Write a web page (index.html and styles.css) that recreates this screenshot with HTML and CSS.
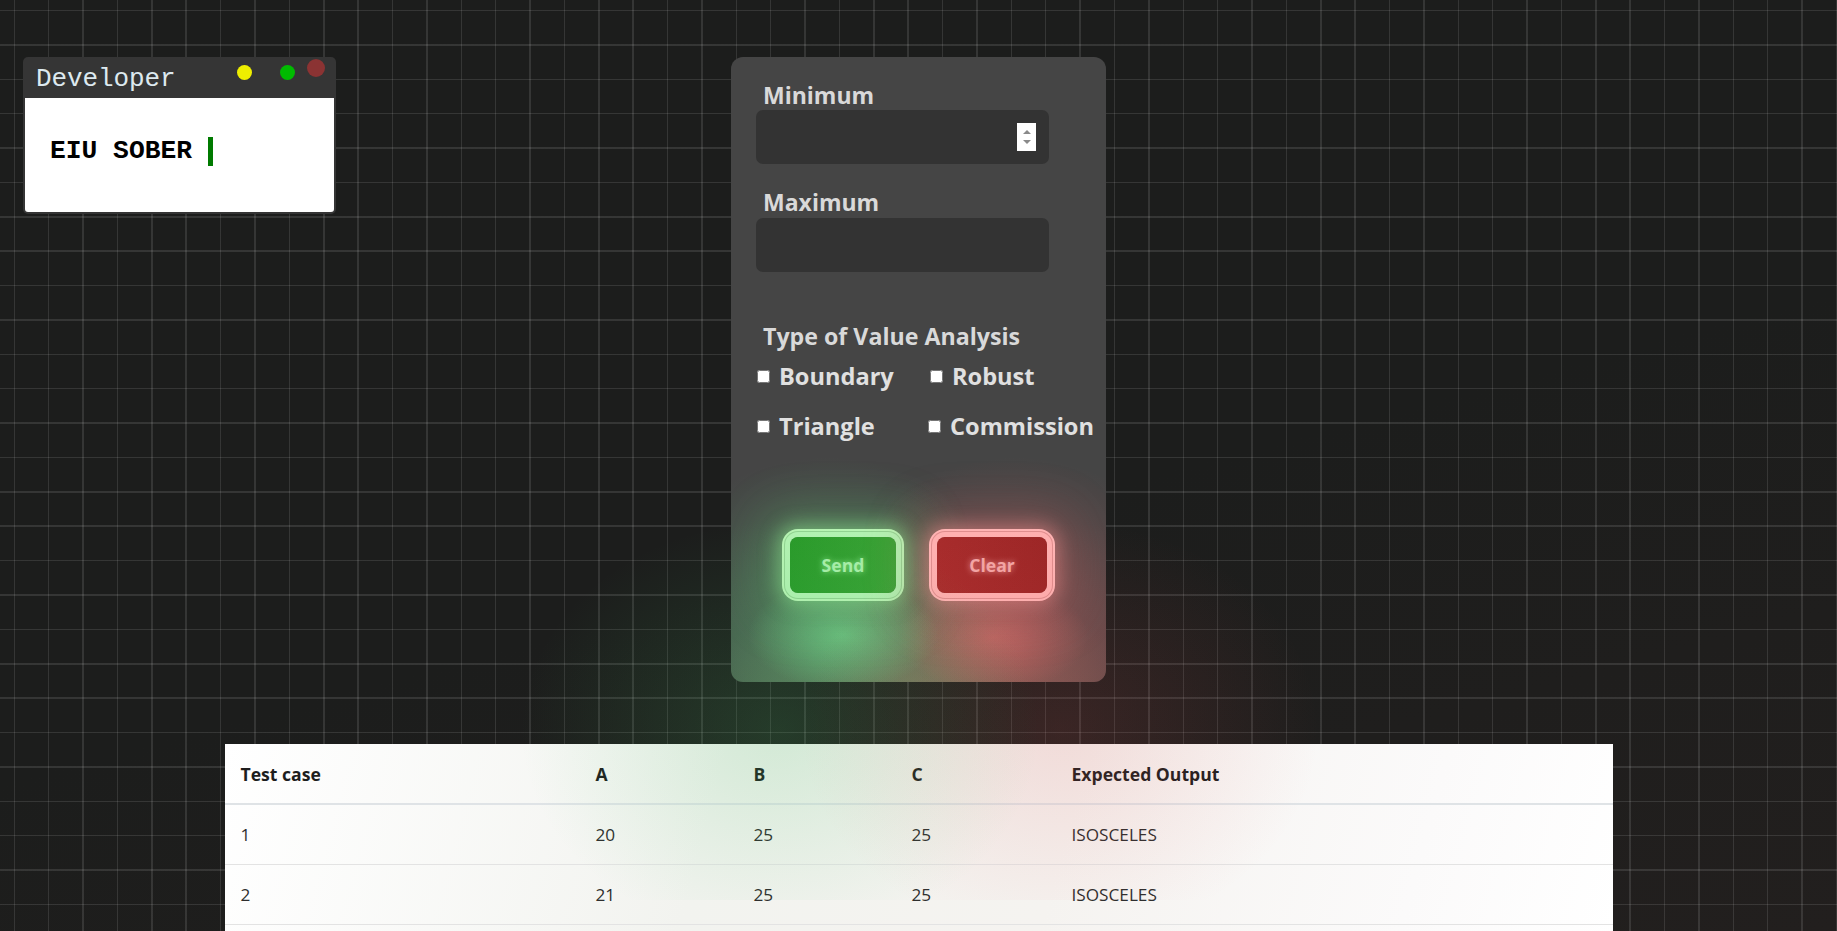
FILE: index.html
```html
<!DOCTYPE html>
<html lang="en">
<head>
<meta charset="utf-8">
<title>Value Analysis</title>
<link rel="stylesheet" href="styles.css">
</head>
<body>
<div class="devwin">
  <div class="devwin-head">
    <span class="devwin-title">Developer</span>
    <span class="dot dot-yellow"></span>
    <span class="dot dot-green"></span>
    <span class="dot dot-red"></span>
  </div>
  <div class="devwin-body">
    <span class="devwin-text">EIU SOBER&nbsp;</span><span class="cursor"></span>
  </div>
</div>

<main class="page">
  <section class="panel">
    <div class="panel-glow"></div>
    <div class="panel-content">
      <label class="field-label" for="min">Minimum</label>
      <div class="input-wrap">
        <input class="field-input" id="min" type="text">
        <span class="spinner"><span class="spin-up"></span><span class="spin-down"></span></span>
      </div>
      <label class="field-label field-label-2" for="max">Maximum</label>
      <div class="input-wrap">
        <input class="field-input" id="max" type="text">
      </div>
      <div class="section-title">Type of Value Analysis</div>
      <div class="checks">
        <label class="check"><input type="checkbox"><span>Boundary</span></label>
        <label class="check"><input type="checkbox"><span>Robust</span></label>
        <label class="check"><input type="checkbox"><span>Triangle</span></label>
        <label class="check check-shift"><input type="checkbox"><span>Commission</span></label>
      </div>
      <div class="buttons">
        <button class="btn btn-send" type="button">Send</button>
        <button class="btn btn-clear" type="button">Clear</button>
      </div>
    </div>
  </section>

  <div class="table-card">
    <table class="results">
      <colgroup>
        <col class="c1"><col class="c2"><col class="c3"><col class="c4"><col class="c5">
      </colgroup>
      <thead>
        <tr><th>Test case</th><th>A</th><th>B</th><th>C</th><th>Expected Output</th></tr>
      </thead>
      <tbody>
        <tr><td>1</td><td>20</td><td>25</td><td>25</td><td>ISOSCELES</td></tr>
        <tr><td>2</td><td>21</td><td>25</td><td>25</td><td>ISOSCELES</td></tr>
      </tbody>
    </table>
  </div>
</main>
<div class="outer-glow"></div>
</body>
</html>
```

FILE: styles.css
```css
html, body {
  margin: 0;
  padding: 0;
}
body {
  width: 1837px;
  height: 931px;
  overflow: hidden;
  position: relative;
  background-color: #1c1d1c;
  background-image:
    repeating-linear-gradient(to right, transparent 0, transparent 13.6px, rgba(255,255,255,0.11) 13.6px, rgba(255,255,255,0.11) 15.1px, transparent 15.1px, transparent 34.38px),
    repeating-linear-gradient(to bottom, transparent 0, transparent 9.8px, rgba(255,255,255,0.11) 9.8px, rgba(255,255,255,0.11) 11.3px, transparent 11.3px, transparent 34.38px),
    linear-gradient(165deg, #1c1d1c 55%, #221f1e 100%);
  background-size: 100% 100%;
  background-repeat: no-repeat;
  font-family: "Open Sans", "Liberation Sans", sans-serif;
}

/* Developer floating window */
.devwin {
  position: absolute;
  left: 23px;
  top: 57px;
  width: 313px;
  height: 157px;
  box-sizing: border-box;
  background: #353535;
  border-radius: 5px;
  padding: 0 2px 2px 2px;
  display: flex;
  flex-direction: column;
}
.devwin-head {
  height: 41px;
  display: flex;
  align-items: flex-start;
  padding-left: 11px;
}
.devwin-title {
  font-family: "Liberation Mono", "Courier New", monospace;
  font-size: 26px;
  line-height: 30px;
  margin-top: 7px;
  color: #dde9ef;
  letter-spacing: -0.1px;
}
.dot {
  display: block;
  border-radius: 50%;
}
.dot-yellow {
  width: 15px;
  height: 15px;
  background: #eeee00;
  margin-left: 61px;
  margin-top: 7.5px;
}
.dot-green {
  width: 15px;
  height: 15px;
  background: #00bb00;
  margin-left: 28px;
  margin-top: 7.5px;
}
.dot-red {
  width: 18px;
  height: 18px;
  background: #8b3333;
  margin-left: 12.5px;
  margin-top: 2px;
}
.devwin-body {
  flex: 1;
  background: #ffffff;
  border-radius: 0 0 3px 3px;
  display: flex;
  align-items: flex-start;
  padding: 39px 0 0 25px;
}
.devwin-text {
  font-family: "Liberation Mono", "Courier New", monospace;
  font-weight: bold;
  font-size: 26.3px;
  line-height: 29px;
  color: #000;
}
.cursor {
  display: block;
  width: 5px;
  height: 29px;
  background: #007a00;
}

/* Main column */
.page {
  display: flex;
  flex-direction: column;
  align-items: center;
  padding-top: 57px;
}

.panel {
  position: relative;
  width: 375px;
  height: 625px;
  box-sizing: border-box;
  background: #454545;
  border-radius: 12px;
  overflow: hidden;
}
.panel-glow {
  position: absolute;
  inset: 0;
  background:
    radial-gradient(ellipse 95px 55px at 112px 578px, rgba(120,230,150,0.6), rgba(120,230,150,0) 100%),
    radial-gradient(ellipse 95px 55px at 262px 580px, rgba(230,110,110,0.55), rgba(230,110,110,0) 100%),
    radial-gradient(ellipse 200px 190px at 95px 590px, rgba(90,180,115,0.45), rgba(90,180,115,0) 100%),
    radial-gradient(ellipse 200px 190px at 285px 590px, rgba(200,95,95,0.42), rgba(200,95,95,0) 100%),
    radial-gradient(ellipse 220px 130px at 190px 650px, rgba(170,150,110,0.45), rgba(170,150,110,0) 100%);
}
.panel-content {
  position: relative;
  padding: 24px 0 0 25px;
}
.field-label {
  display: block;
  font-weight: 700;
  font-size: 23px;
  line-height: 28px;
  color: #d9d9d9;
  padding-left: 7px;
  margin-bottom: 1px;
}
.field-label-2 {
  margin-top: 23.5px;
  margin-bottom: 2.5px;
}
.input-wrap {
  position: relative;
  width: 293px;
  height: 54px;
}
.field-input {
  display: block;
  width: 100%;
  height: 100%;
  box-sizing: border-box;
  border: none;
  border-radius: 7px;
  background: #333333;
  outline: none;
  padding: 0 14px;
  color: #eee;
  font-family: inherit;
  font-size: 18px;
}
.spinner {
  position: absolute;
  right: 13px;
  top: 13px;
  width: 19px;
  height: 28px;
  background: #ffffff;
  display: flex;
  flex-direction: column;
  align-items: center;
  justify-content: center;
  gap: 6px;
}
.spin-up {
  width: 0;
  height: 0;
  border-left: 4px solid transparent;
  border-right: 4px solid transparent;
  border-bottom: 4px solid #8a8a8a;
}
.spin-down {
  width: 0;
  height: 0;
  border-left: 4px solid transparent;
  border-right: 4px solid transparent;
  border-top: 4px solid #8a8a8a;
}
.section-title {
  font-weight: 700;
  font-size: 23.2px;
  line-height: 28px;
  color: #d9d9d9;
  padding-left: 7px;
  margin-top: 49.5px;
}
.checks {
  display: grid;
  grid-template-columns: 173px auto;
  row-gap: 22px;
  margin-top: 12px;
  padding-left: 1px;
}
.check {
  display: flex;
  align-items: center;
  gap: 9px;
  font-weight: 700;
  font-size: 23.6px;
  line-height: 28px;
  color: #e0e0e0;
  white-space: nowrap;
}
.check input {
  margin: 0;
  width: 13px;
  height: 13px;
  flex: none;
  position: relative;
  top: 1px;
}
.check-shift {
  margin-left: -2px;
}
.buttons {
  display: flex;
  justify-content: center;
  gap: 41px;
  margin-top: 97px;
  padding-right: 25px;
}
.btn {
  height: 56px;
  border: none;
  border-radius: 8px;
  font-family: inherit;
  font-weight: 700;
  font-size: 17.6px;
  cursor: pointer;
  padding: 0;
}
.btn-send {
  width: 106px;
  background: linear-gradient(90deg, #2a9a2a, #3aa236);
  color: #a9eea9;
  text-shadow: 0 0 6px rgba(170,255,170,0.8);
  box-shadow:
    0 0 0 5px #b2f2b2,
    0 0 0 6px #92d392,
    0 0 0 8px #b8f4b4,
    0 0 18px 12px rgba(150,240,150,0.5),
    0 0 48px 26px rgba(100,200,110,0.28);
}
.btn-clear {
  width: 110px;
  background: linear-gradient(90deg, #a82c2c, #9c2626);
  color: #f3a6a6;
  text-shadow: 0 0 6px rgba(255,180,180,0.8);
  box-shadow:
    0 0 0 5px #ffb0b0,
    0 0 0 6px #e08e8e,
    0 0 0 8px #ffb4b4,
    0 0 18px 12px rgba(255,150,150,0.45),
    0 0 48px 26px rgba(210,100,100,0.26);
}

/* Table */
.table-card {
  margin-top: 62px;
  width: 1388px;
  height: 200px;
  background: linear-gradient(105deg, #ffffff 0%, #f2f3ef 35%, #f5f3f0 60%, #fbfafa 85%, #ffffff 100%);
}
.results {
  width: 100%;
  table-layout: fixed;
  border-collapse: collapse;
}
.c1 { width: 355px; }
.c2 { width: 158px; }
.c3 { width: 158px; }
.c4 { width: 160px; }
.results th {
  text-align: left;
  font-weight: 700;
  font-size: 17.6px;
  color: #1e1e1e;
  height: 59px;
  padding: 0 0 0 16px;
  border-bottom: 2px solid #dfe3e6;
}
.results td {
  text-align: left;
  font-weight: 400;
  font-size: 17.2px;
  color: #2e2e2e;
  height: 59px;
  padding: 0 0 0 16px;
  border-bottom: 1px solid #e3e3e3;
}

.outer-glow {
  position: absolute;
  left: 520px;
  top: 500px;
  width: 800px;
  height: 400px;
  pointer-events: none;
  background:
    radial-gradient(ellipse 260px 210px at 260px 230px, rgba(70,190,100,0.19), rgba(70,190,100,0) 100%),
    radial-gradient(ellipse 260px 210px at 540px 230px, rgba(220,80,80,0.15), rgba(220,80,80,0) 100%);
}
```
